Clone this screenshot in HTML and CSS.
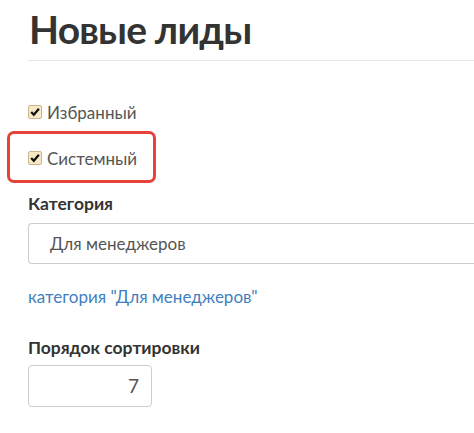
FILE: index.html
```html
<!DOCTYPE html>
<html lang="ru">
<head>
    <meta charset="UTF-8">
    <meta name="viewport" content="width=device-width, initial-scale=1.0">
    <title>Новые лиды</title>
    <link rel="stylesheet" href="styles.css">
</head>
<body>
    <div class="page">
        <h1 class="page-title">Новые лиды</h1>

        <div class="check-row">
            <span class="check"><svg viewBox="0 0 12 12" width="12" height="12"><path d="M2.2 6.1 L4.8 8.8 L9.9 2.8" fill="none" stroke="#111" stroke-width="2.2"/></svg></span>
            <span class="check-label">Избранный</span>
        </div>

        <div class="highlight">
            <div class="check-row">
                <span class="check"><svg viewBox="0 0 12 12" width="12" height="12"><path d="M2.2 6.1 L4.8 8.8 L9.9 2.8" fill="none" stroke="#111" stroke-width="2.2"/></svg></span>
                <span class="check-label">Системный</span>
            </div>
        </div>

        <div class="field">
            <div class="field-label">Категория</div>
            <div class="select">Для менеджеров</div>
        </div>

        <a class="category-link" href="#">категория "Для менеджеров"</a>

        <div class="field field-sort">
            <div class="field-label">Порядок сортировки</div>
            <div class="number-input">7</div>
        </div>
    </div>
</body>
</html>
```

FILE: styles.css
```css
body {
    margin: 0;
    font-family: Lato, "Open Sans", sans-serif;
    background-color: #fff;
    color: #555;
}
.page {
    padding: 0 0 0 28px;
    overflow: hidden;
}
.page-title {
    margin: 0;
    padding: 7px 0 9px 1px;
    font-size: 39px;
    line-height: 44px;
    letter-spacing: -0.8px;
    font-weight: 700;
    color: #333;
    border-bottom: 1px solid #e8e8e8;
}
.check-row {
    display: flex;
    align-items: center;
    gap: 5px;
    height: 24px;
}
.page-title + .check-row {
    margin-top: 39px;
}
.check {
    width: 12px;
    height: 12px;
    border: 1px solid #c9b68e;
    border-radius: 2px;
    background-color: #f8e9c6;
    display: flex;
    align-items: center;
    justify-content: center;
}
.check-label {
    font-size: 17px;
    color: #555;
}
.highlight {
    width: 125px;
    margin: 7px 0 0 -21px;
    padding: 12px 0 10px 18px;
    border: 3.5px solid #e6423a;
    border-radius: 7px;
}
.field-label {
    font-size: 17.5px;
    font-weight: 700;
    color: #333;
    line-height: 20px;
}
.field {
    margin-top: 11px;
}
.select {
    margin-top: 9px;
    height: 39px;
    line-height: 39px;
    padding-left: 21px;
    border: 1px solid #ccc;
    border-right: none;
    border-radius: 4px 0 0 4px;
    font-size: 17px;
    color: #555;
}
.category-link {
    display: block;
    margin-top: 23px;
    font-size: 17px;
    line-height: 20px;
    color: #3f7fc0;
    text-decoration: none;
}
.field-sort {
    margin-top: 31px;
}
.number-input {
    margin-top: 7px;
    width: 110px;
    height: 40px;
    line-height: 40px;
    padding-right: 12px;
    border: 1px solid #ccc;
    border-radius: 4px;
    text-align: right;
    font-size: 19px;
    color: #555;
}
```
